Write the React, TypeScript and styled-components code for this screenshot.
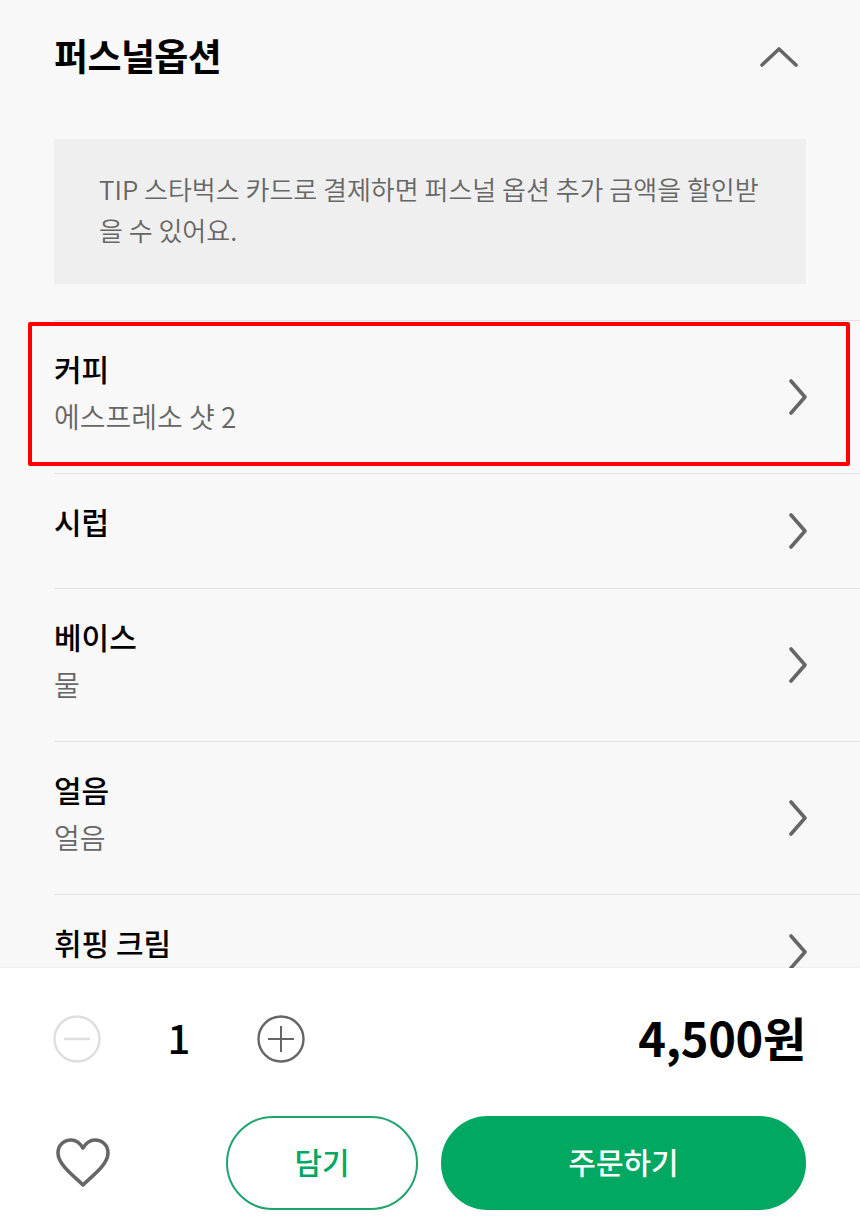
import React from "react";
import styled, { createGlobalStyle } from "styled-components";

const GlobalStyle = createGlobalStyle`
  html, body {
    margin: 0;
    padding: 0;
    background: #f8f8f8;
    font-family: "Noto Sans CJK KR", "Noto Sans", sans-serif;
  }
`;

const Page = styled.div`
  width: 860px;
  height: 1229px;
  display: flex;
  flex-direction: column;
  overflow: hidden;
`;

const Scroller = styled.div`
  flex: 1;
  min-height: 0;
  overflow: hidden;
  padding-left: 54px;
  background: #f8f8f8;
`;

const Header = styled.div`
  height: 139px;
  display: flex;
  align-items: flex-start;
  justify-content: space-between;
  padding-top: 30px;
  padding-right: 54px;
  box-sizing: border-box;
`;

const Title = styled.h2`
  margin: 0;
  font-size: 37px;
  line-height: 50px;
  font-weight: 700;
  color: #000;
  letter-spacing: -0.6px;
`;

const HeaderIcon = styled.svg`
  width: 38px;
  height: 20px;
  margin-top: 17px;
  margin-right: 8px;
  fill: none;
  stroke: #666;
  stroke-width: 3.6;
  stroke-linecap: round;
  stroke-linejoin: round;
`;

const TipBox = styled.div`
  width: 752px;
  height: 145px;
  box-sizing: border-box;
  margin-bottom: 36px;
  padding: 29px 45px 0;
  background: #efefef;
  color: #666;
  font-size: 26px;
  line-height: 41px;
  font-weight: 350;
`;

const Row = styled.div<{ $tall?: boolean }>`
  position: relative;
  height: ${(p) => (p.$tall ? 153 : 115)}px;
  box-sizing: border-box;
  display: flex;
  align-items: center;
  justify-content: space-between;
  padding-right: 53px;
  border-top: 1px solid #e2e2e2;
`;

const RowText = styled.div`
  align-self: flex-start;
  padding-top: 27px;
`;

const RowTitle = styled.div`
  font-size: 30px;
  line-height: 40px;
  font-weight: 500;
  color: #000;
`;

const RowSub = styled.div`
  margin-top: 8px;
  font-size: 28px;
  line-height: 40px;
  font-weight: 350;
  color: #666;
`;

const Chevron = styled.svg`
  width: 18px;
  height: 36px;
  fill: none;
  stroke: #666;
  stroke-width: 3.6;
  stroke-linecap: round;
  stroke-linejoin: round;
`;

const Highlight = styled.div`
  position: absolute;
  left: -26px;
  right: 10px;
  top: 1px;
  height: 144px;
  box-sizing: border-box;
  border: 4.5px solid #ff0000;
  border-radius: 2px;
  pointer-events: none;
`;

const Footer = styled.div`
  position: relative;
  height: 261px;
  box-sizing: border-box;
  padding: 46px 54px 0;
  background: #fff;
  box-shadow: 0 -1px 2px rgba(0, 0, 0, 0.05);
`;

const QuantityRow = styled.div`
  display: flex;
  align-items: center;
  justify-content: space-between;
  height: 50px;
`;

const Stepper = styled.div`
  display: flex;
  align-items: center;
  margin-left: -1px;
`;

const StepIcon = styled.svg<{ $disabled?: boolean }>`
  width: 48px;
  height: 48px;
  fill: none;
  stroke: ${(p) => (p.$disabled ? "#dedede" : "#666")};
`;

const Count = styled.div`
  width: 156px;
  padding-bottom: 4px;
  text-align: center;
  font-size: 40px;
  line-height: 46px;
  font-weight: 500;
  color: #000;
`;

const Price = styled.div`
  padding-bottom: 4px;
  font-size: 47px;
  line-height: 46px;
  font-weight: 700;
  color: #000;
  letter-spacing: -0.3px;
`;

const ActionRow = styled.div`
  display: flex;
  align-items: center;
  margin-top: 52px;
`;

const HeartIcon = styled.svg`
  width: 56px;
  height: 50px;
  margin-left: 1px;
  margin-right: 115px;
  fill: none;
  stroke: #666;
  stroke-width: 3.6;
  stroke-linejoin: round;
`;

const Button = styled.button<{ $primary?: boolean }>`
  height: 94px;
  width: ${(p) => (p.$primary ? 365 : 192)}px;
  margin-left: ${(p) => (p.$primary ? 23 : 0)}px;
  padding: 0 0 4px;
  border-radius: 47px;
  border: 2px solid ${(p) => (p.$primary ? "#00a862" : "#1fa46c")};
  background: ${(p) => (p.$primary ? "#00a862" : "#fff")};
  color: ${(p) => (p.$primary ? "#fff" : "#00a862")};
  font-family: inherit;
  font-size: 30px;
  font-weight: 500;
`;

const options = [
  { name: "커피", value: "에스프레소 샷 2", marked: true },
  { name: "시럽" },
  { name: "베이스", value: "물" },
  { name: "얼음", value: "얼음" },
  { name: "휘핑 크림" },
];

export default function App() {
  return (
    <Page>
      <GlobalStyle />
      <Scroller>
        <Header>
          <Title>퍼스널옵션</Title>
          <HeaderIcon viewBox="0 0 38 20">
            <path d="M2 18 L19 2 L36 18" />
          </HeaderIcon>
        </Header>
        <TipBox>
          TIP 스타벅스 카드로 결제하면 퍼스널 옵션 추가 금액을 할인받
          <br />을 수 있어요.
        </TipBox>
        {options.map((option) => (
          <Row key={option.name} $tall={!!option.value}>
            <RowText>
              <RowTitle>{option.name}</RowTitle>
              {option.value && <RowSub>{option.value}</RowSub>}
            </RowText>
            <Chevron viewBox="0 0 18 36">
              <path d="M2 2 L16 18 L2 34" />
            </Chevron>
            {option.marked && <Highlight />}
          </Row>
        ))}
      </Scroller>
      <Footer>
        <QuantityRow>
          <Stepper>
            <StepIcon $disabled viewBox="0 0 48 48">
              <circle cx="24" cy="24" r="22.5" strokeWidth="2.4" />
              <path d="M11 24 H37" strokeWidth="2.4" />
            </StepIcon>
            <Count>1</Count>
            <StepIcon viewBox="0 0 48 48">
              <circle cx="24" cy="24" r="22.5" strokeWidth="2.4" />
              <path d="M11 24 H37 M24 11 V37" strokeWidth="2" />
            </StepIcon>
          </Stepper>
          <Price>4,500원</Price>
        </QuantityRow>
        <ActionRow>
          <HeartIcon viewBox="0 0 56 50">
            <path d="M28 47 C20 39 3 27 3 15 C3 7 9 2 16 2 C21 2 25 5 28 10 C31 5 35 2 40 2 C47 2 53 7 53 15 C53 27 36 39 28 47 Z" />
          </HeartIcon>
          <Button>담기</Button>
          <Button $primary>주문하기</Button>
        </ActionRow>
      </Footer>
    </Page>
  );
}
